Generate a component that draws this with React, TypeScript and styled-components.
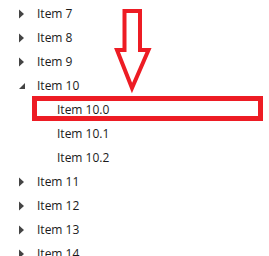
import * as React from 'react'
import styled, {createGlobalStyle} from 'styled-components'

const GlobalStyle = createGlobalStyle`
  html, body {
    margin: 0;
    padding: 0;
    background: #ffffff;
  }
  body {
    width: 269px;
    height: 256px;
    overflow: hidden;
  }
`

// Tree container
const Tree = styled.div`
  position: relative;
  width: 269px;
  height: 256px;
  overflow: hidden;
  padding-top: 2px;
  box-sizing: border-box;
  font-family: "Open Sans", "Noto Sans", "DejaVu Sans", sans-serif;
  font-size: 12px;
  color: #1b1b1b;
`

// One row of the tree
const Row = styled.div<{$level: number}>`
  display: flex;
  align-items: center;
  height: 24px;
  padding-left: ${({$level}) => 18 + $level * 20}px;
`

const Expander = styled.span`
  display: flex;
  align-items: center;
  width: 19px;
  height: 24px;
  flex: none;
`

const Label = styled.span`
  white-space: nowrap;
  line-height: 16px;
`

// Annotation overlays
const Highlight = styled.div`
  position: absolute;
  left: 32px;
  top: 96px;
  width: 231px;
  height: 25px;
  border: 5px solid #ed1c24;
  box-sizing: border-box;
  pointer-events: none;
`

const Arrow = styled.svg`
  position: absolute;
  left: 112px;
  top: 6px;
  pointer-events: none;
`

const Collapsed = () => (
  <svg width="7" height="10" viewBox="0 0 7 10">
    <path d="M1 0.5 L6 5 L1 9.5 Z" fill="#444444" />
  </svg>
)

const Expanded = () => (
  <svg width="8" height="8" viewBox="0 0 8 8">
    <path d="M7 1 L7 7 L1 7 Z" fill="#444444" />
  </svg>
)

interface Item {
  label: string
  level: number
  state?: 'open' | 'closed'
}

const items: Item[] = [
  {label: 'Item 7', level: 0, state: 'closed'},
  {label: 'Item 8', level: 0, state: 'closed'},
  {label: 'Item 9', level: 0, state: 'closed'},
  {label: 'Item 10', level: 0, state: 'open'},
  {label: 'Item 10.0', level: 1},
  {label: 'Item 10.1', level: 1},
  {label: 'Item 10.2', level: 1},
  {label: 'Item 11', level: 0, state: 'closed'},
  {label: 'Item 12', level: 0, state: 'closed'},
  {label: 'Item 13', level: 0, state: 'closed'},
  {label: 'Item 14', level: 0, state: 'closed'},
]

export default function App() {
  return (
    <>
      <GlobalStyle />
      <Tree>
        {items.map(item => (
          <Row key={item.label} $level={item.level}>
            <Expander>
              {item.state === 'closed' && <Collapsed />}
              {item.state === 'open' && <Expanded />}
            </Expander>
            <Label>{item.label}</Label>
          </Row>
        ))}
        <Highlight />
        <Arrow width="42" height="88" viewBox="0 0 42 88">
          <path
            d="M12.5 5 L28 5 L28 44 L36.5 44 L20 82 L5 44 L12.5 44 Z"
            fill="#ffffff"
            stroke="#ed1c24"
            strokeWidth="4"
            strokeLinejoin="miter"
          />
        </Arrow>
      </Tree>
    </>
  )
}
